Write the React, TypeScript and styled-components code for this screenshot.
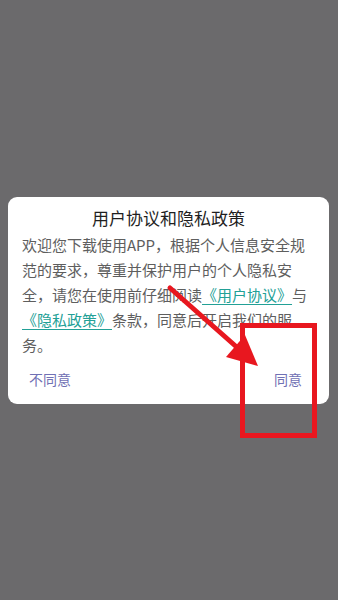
import React from 'react';
import styled, { createGlobalStyle } from 'styled-components';

const GlobalStyle = createGlobalStyle`
   html, body {
      margin: 0;
      padding: 0;
      background: #6b6a6c;
   }
   body {
      font-family: 'Noto Sans CJK SC', 'Noto Sans', sans-serif;
   }
`;

const Screen = styled.div`
   position: relative;
   width: 338px;
   height: 600px;
   background: #6b6a6c;
   display: flex;
   align-items: center;
   justify-content: center;
   overflow: hidden;
`;

const Dialog = styled.div`
   width: 321px;
   margin-left: -1px;
   background: #ffffff;
   border-radius: 9px;
   padding-top: 10px;
   box-sizing: border-box;
   display: flex;
   flex-direction: column;
`;

const Title = styled.div`
   font-size: 17px;
   line-height: 22px;
   color: #1f1f1f;
   text-align: center;
   margin-bottom: 3px;
`;

const Body = styled.p`
   margin: 0;
   padding: 0 20px 0 14px;
   font-size: 15px;
   line-height: 25px;
   color: #5e5e5e;
`;

const Link = styled.a`
   color: #22a096;
   text-decoration: underline;
   text-underline-offset: 3px;
   text-decoration-thickness: 1px;
`;

const Actions = styled.div`
   display: flex;
   justify-content: space-between;
   margin-top: 12px;
   padding: 0 27px 15px 21px;
`;

const ActionButton = styled.button`
   border: none;
   background: none;
   padding: 0;
   font-family: inherit;
   font-size: 14px;
   line-height: 20px;
   color: #7070b4;
   cursor: pointer;
`;

const Annotation = styled.svg`
   position: absolute;
   left: 0;
   top: 0;
   pointer-events: none;
`;

export default function App() {
   return (
      <>
         <GlobalStyle />
         <Screen>
            <Dialog>
               <Title>用户协议和隐私政策</Title>
               <Body>
                  欢迎您下载使用APP，根据个人信息安全规范的要求，尊重并保护用户的个人隐私安全，请您在使用前仔细阅读
                  <Link>《用户协议》</Link>与<Link>《隐私政策》</Link>条款，同意后开启我们的服务。
               </Body>
               <Actions>
                  <ActionButton>不同意</ActionButton>
                  <ActionButton>同意</ActionButton>
               </Actions>
            </Dialog>
            <Annotation width="338" height="600" viewBox="0 0 338 600">
               <line x1="170" y1="288" x2="240" y2="350" stroke="#e8171f" strokeWidth="5" strokeLinecap="round" />
               <polygon points="258,366 226,357 245,335" fill="#e8171f" />
               <rect x="242.5" y="325.5" width="72" height="110" fill="none" stroke="#e8171f" strokeWidth="5" />
            </Annotation>
         </Screen>
      </>
   );
}
